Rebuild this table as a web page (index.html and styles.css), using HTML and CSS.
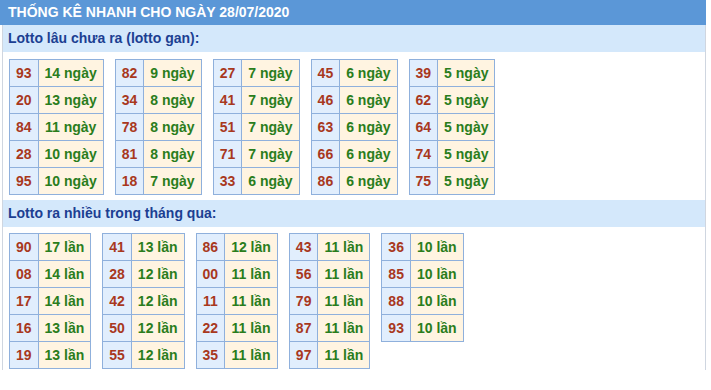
FILE: index.html
```html
<!DOCTYPE html>
<html lang="vi">
<head>
<meta charset="utf-8">
<title>Thống kê nhanh</title>
<link rel="stylesheet" href="styles.css">
</head>
<body>
<div class="wrap">
  <div class="head">THỐNG KÊ NHANH CHO NGÀY 28/07/2020</div>
  <div class="box">
    <div class="sub">Lotto lâu chưa ra (lotto gan):</div>
    <div class="tables first">
      <table class="t"><tr><td class="n">93</td><td class="c">14 ngày</td></tr><tr><td class="n">20</td><td class="c">13 ngày</td></tr><tr><td class="n">84</td><td class="c">11 ngày</td></tr><tr><td class="n">28</td><td class="c">10 ngày</td></tr><tr><td class="n">95</td><td class="c">10 ngày</td></tr></table>
      <table class="t"><tr><td class="n">82</td><td class="c">9 ngày</td></tr><tr><td class="n">34</td><td class="c">8 ngày</td></tr><tr><td class="n">78</td><td class="c">8 ngày</td></tr><tr><td class="n">81</td><td class="c">8 ngày</td></tr><tr><td class="n">18</td><td class="c">7 ngày</td></tr></table>
      <table class="t"><tr><td class="n">27</td><td class="c">7 ngày</td></tr><tr><td class="n">41</td><td class="c">7 ngày</td></tr><tr><td class="n">51</td><td class="c">7 ngày</td></tr><tr><td class="n">71</td><td class="c">7 ngày</td></tr><tr><td class="n">33</td><td class="c">6 ngày</td></tr></table>
      <table class="t"><tr><td class="n">45</td><td class="c">6 ngày</td></tr><tr><td class="n">46</td><td class="c">6 ngày</td></tr><tr><td class="n">63</td><td class="c">6 ngày</td></tr><tr><td class="n">66</td><td class="c">6 ngày</td></tr><tr><td class="n">86</td><td class="c">6 ngày</td></tr></table>
      <table class="t"><tr><td class="n">39</td><td class="c">5 ngày</td></tr><tr><td class="n">62</td><td class="c">5 ngày</td></tr><tr><td class="n">64</td><td class="c">5 ngày</td></tr><tr><td class="n">74</td><td class="c">5 ngày</td></tr><tr><td class="n">75</td><td class="c">5 ngày</td></tr></table>
    </div>
    <div class="sub">Lotto ra nhiều trong tháng qua:</div>
    <div class="tables second">
      <table class="t"><tr><td class="n">90</td><td class="c">17 lần</td></tr><tr><td class="n">08</td><td class="c">14 lần</td></tr><tr><td class="n">17</td><td class="c">14 lần</td></tr><tr><td class="n">16</td><td class="c">13 lần</td></tr><tr><td class="n">19</td><td class="c">13 lần</td></tr></table>
      <table class="t"><tr><td class="n">41</td><td class="c">13 lần</td></tr><tr><td class="n">28</td><td class="c">12 lần</td></tr><tr><td class="n">42</td><td class="c">12 lần</td></tr><tr><td class="n">50</td><td class="c">12 lần</td></tr><tr><td class="n">55</td><td class="c">12 lần</td></tr></table>
      <table class="t"><tr><td class="n">86</td><td class="c">12 lần</td></tr><tr><td class="n">00</td><td class="c">11 lần</td></tr><tr><td class="n">11</td><td class="c">11 lần</td></tr><tr><td class="n">22</td><td class="c">11 lần</td></tr><tr><td class="n">35</td><td class="c">11 lần</td></tr></table>
      <table class="t"><tr><td class="n">43</td><td class="c">11 lần</td></tr><tr><td class="n">56</td><td class="c">11 lần</td></tr><tr><td class="n">79</td><td class="c">11 lần</td></tr><tr><td class="n">87</td><td class="c">11 lần</td></tr><tr><td class="n">97</td><td class="c">11 lần</td></tr></table>
      <table class="t"><tr><td class="n">36</td><td class="c">10 lần</td></tr><tr><td class="n">85</td><td class="c">10 lần</td></tr><tr><td class="n">88</td><td class="c">10 lần</td></tr><tr><td class="n">93</td><td class="c">10 lần</td></tr></table>
    </div>
  </div>
</div>
</body>
</html>
```
FILE: styles.css
```css
html, body {
  margin: 0;
  padding: 0;
  background: #ffffff;
}
body {
  font-family: "Liberation Sans", Arial, sans-serif;
  font-size: 14px;
  font-weight: bold;
}
.wrap {
  width: 706px;
}
.head {
  height: 25px;
  line-height: 25px;
  padding-left: 8px;
  background: #5b97d7;
  color: #ffffff;
}
.box {
  margin-left: 2px;
  border-left: 1px solid #cfd6e0;
  border-right: 1px solid #cfd6e0;
}
.sub {
  height: 27px;
  line-height: 27px;
  padding-left: 5px;
  background: #d4e8fb;
  color: #1c3f92;
}
.tables {
  display: flex;
  align-items: flex-start;
  gap: 11px;
  padding: 7px 6px 5px;
}
.tables.second {
  padding: 6px 6px 1px;
}
.t {
  border-collapse: collapse;
}
.t td {
  line-height: 26px;
  padding: 0;
  border: 1px solid #8fb0dc;
  text-align: center;
}
.t td.n {
  padding: 0 6px;
  background: #e1eefd;
  color: #a8381d;
}
.t td.c {
  padding: 0 6px;
  background: #fff4e1;
  color: #2a7d1c;
}
```
